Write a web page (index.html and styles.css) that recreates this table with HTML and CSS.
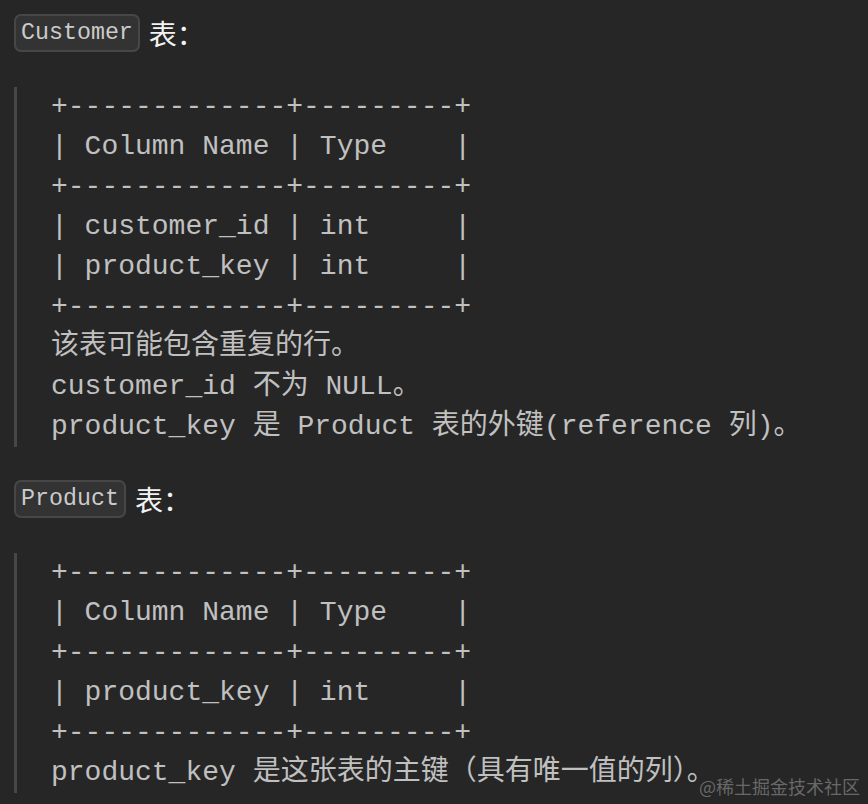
FILE: index.html
```html
<!DOCTYPE html>
<html lang="zh">
<head>
<meta charset="utf-8">
<title>Customer / Product</title>
<link rel="stylesheet" href="styles.css">
</head>
<body>
<div class="page">
  <div class="title"><code class="tag">Customer</code><span class="title-text">表：</span></div>
  <div class="quote">
<pre>+-------------+---------+
| Column Name | Type    |
+-------------+---------+
| customer_id | int     |
| product_key | int     |
+-------------+---------+
该表可能包含重复的行。
customer_id 不为 NULL。
product_key 是 Product 表的外键(reference 列)。</pre>
  </div>
  <div class="title"><code class="tag">Product</code><span class="title-text">表：</span></div>
  <div class="quote">
<pre>+-------------+---------+
| Column Name | Type    |
+-------------+---------+
| product_key | int     |
+-------------+---------+
product_key 是这张表的主键（具有唯一值的列）。</pre>
  </div>
</div>
<div class="watermark">@稀土掘金技术社区</div>
</body>
</html>
```
FILE: styles.css
```css
html, body {
  margin: 0;
  background: #262626;
}
body {
  width: 868px;
  height: 804px;
  overflow: hidden;
  position: relative;
}
.page {
  padding: 14px 0 0 14px;
}
.title {
  display: flex;
  align-items: center;
  gap: 9px;
  height: 38px;
}
.tag {
  box-sizing: border-box;
  height: 38px;
  padding: 0 5px;
  font-family: "Courier New", "Nimbus Mono PS", "FreeMono", "Liberation Mono", monospace;
  font-size: 23.3px;
  line-height: 34px;
  color: #cbcbcb;
  background: #333333;
  border: 2px solid #474747;
  border-radius: 7px;
}
.title-text {
  font-family: "Noto Sans CJK SC", sans-serif;
  font-size: 28px;
  color: #f2f2f2;
  line-height: 38px;
}
.quote {
  margin: 35px 0 33px 0;
  border-left: 3px solid #474747;
  padding-left: 34px;
}
.quote pre {
  margin: 0;
  font-family: "Courier New", "Nimbus Mono PS", "FreeMono", "Liberation Mono", "Noto Sans CJK SC", monospace;
  font-size: 28px;
  line-height: 40px;
  color: #c0c0c0;
}
.watermark {
  position: absolute;
  right: 8px;
  bottom: 6px;
  font-family: "Noto Sans CJK SC", sans-serif;
  font-size: 18px;
  line-height: 24px;
  color: rgba(190, 190, 190, 0.45);
}
```
